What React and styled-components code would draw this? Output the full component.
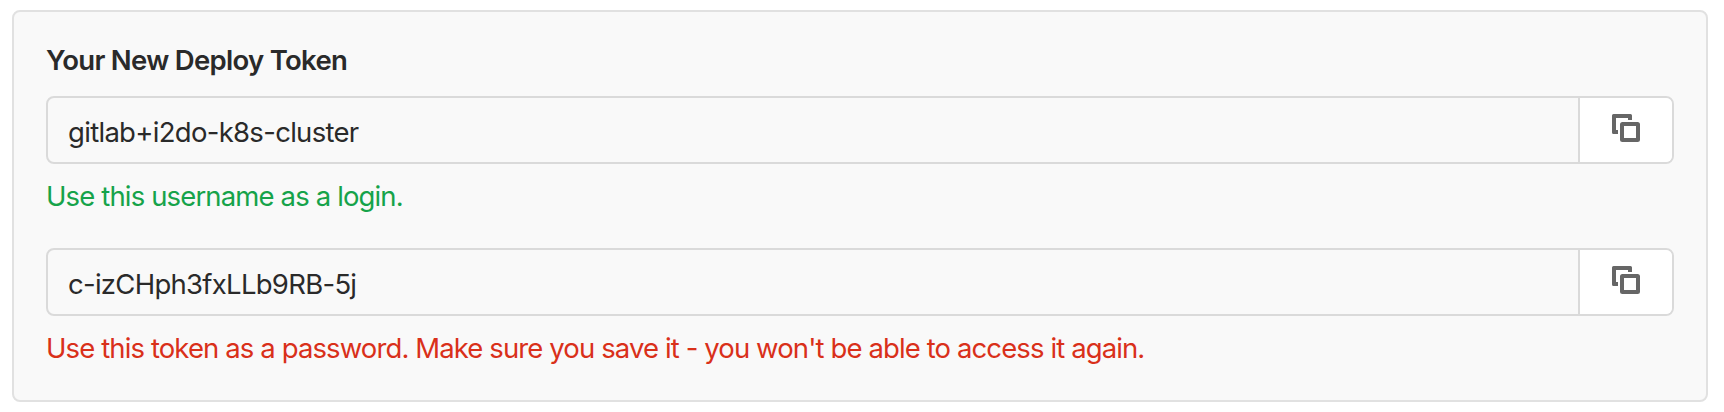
import React from "react";
import styled, { createGlobalStyle } from "styled-components";

const GlobalStyle = createGlobalStyle`
  *, *::before, *::after { box-sizing: border-box; }
  body {
    margin: 0;
    background: #fff;
    color: #2a2a2a;
    font-family: Inter, "Liberation Sans", sans-serif;
    font-size: 27.5px;
    line-height: 40px;
  }
`;

const Page = styled.main`
  padding: 10px 16px 10px 12px;
`;

const Panel = styled.section`
  height: 392px;
  padding: 28px 32px;
  border: 2px solid #e1e1e1;
  border-radius: 8px;
  background: #f9f9f9;
`;

const Title = styled.h5`
  margin: 0 0 16px;
  font-size: 27.5px;
  font-weight: 600;
  letter-spacing: -0.7px;
`;

const Field = styled.div`
  margin-bottom: 32px;
`;

const InputGroup = styled.div`
  display: flex;
  height: 68px;
  border: 2px solid #dadada;
  border-radius: 8px;
  overflow: hidden;
`;

const Value = styled.div`
  flex: 1;
  padding: 14px 20px 10px;
  white-space: nowrap;
  letter-spacing: ${(p) => p.$tracking};
`;

const CopyButton = styled.button`
  display: flex;
  justify-content: center;
  width: 94px;
  margin: 0;
  padding: 16px 0 0;
  border: 0;
  border-left: 2px solid #dadada;
  background: #fff;
  color: #666;
`;

const Hint = styled.p`
  margin: 12px 0 0;
  white-space: nowrap;
  letter-spacing: ${(p) => p.$tracking};
  color: ${(p) => (p.$danger ? "#d9301a" : "#16a34a")};
`;

const CopyIcon = () => (
  <svg width="28" height="28" viewBox="0 0 28 28" fill="none" aria-hidden="true">
    <path
      d="M1.5 0h17A1.5 1.5 0 0 1 20 1.5V6h-4V4H4v12h2v4H1.5A1.5 1.5 0 0 1 0 18.5v-17A1.5 1.5 0 0 1 1.5 0Z"
      fill="currentColor"
    />
    <rect x="10" y="10" width="16" height="16" rx="0.5" stroke="currentColor" strokeWidth="4" strokeLinejoin="round" />
  </svg>
);

const TokenField = ({ value, tracking, hint, hintTracking, danger }) => (
  <Field>
    <InputGroup>
      <Value $tracking={tracking}>{value}</Value>
      <CopyButton type="button" aria-label="Copy">
        <CopyIcon />
      </CopyButton>
    </InputGroup>
    <Hint $danger={danger} $tracking={hintTracking}>{hint}</Hint>
  </Field>
);

export default function App() {
  return (
    <>
      <GlobalStyle />
      <Page>
        <Panel>
          <Title>Your New Deploy Token</Title>
          <TokenField
            value="gitlab+i2do-k8s-cluster"
            tracking="-0.7px"
            hint="Use this username as a login."
            hintTracking="-0.86px"
          />
          <TokenField
            value="c-izCHph3fxLLb9RB-5j"
            tracking="-0.72px"
            hint="Use this token as a password. Make sure you save it - you won't be able to access it again."
            hintTracking="-0.89px"
            danger
          />
        </Panel>
      </Page>
    </>
  );
}
